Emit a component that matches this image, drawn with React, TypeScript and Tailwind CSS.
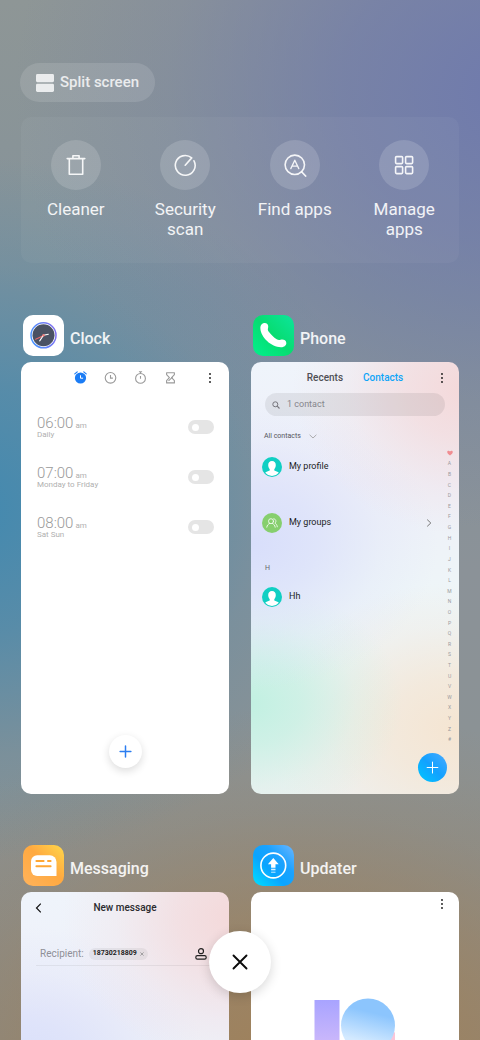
import type { ReactNode } from "react";

type IconProps = { className?: string };

function SplitIcon({ className }: IconProps) {
  return (
    <svg viewBox="0 0 18 18" className={className} fill="currentColor" aria-hidden="true">
      <rect x="0" y="0" width="18" height="8.2" rx="1.4" />
      <rect x="0" y="9.8" width="18" height="8.2" rx="1.4" />
    </svg>
  );
}

function TrashIcon() {
  return (
    <svg viewBox="0 0 24 24" className="size-6" fill="none" stroke="currentColor" strokeWidth="1.6" strokeLinejoin="round" strokeLinecap="round" aria-hidden="true">
      <path d="M3.200 5.600h17.600M5.300 5.600v15.600h13.400v-15.600M8.900 5.400V2.800h6.200v2.600" />
    </svg>
  );
}

function ScanIcon() {
  return (
    <svg viewBox="0 0 24 24" className="size-6" fill="none" stroke="currentColor" strokeWidth="1.6" strokeLinecap="round" strokeLinejoin="round" aria-hidden="true">
      <path d="M21 7.800A9.900 9.900 0 1 1 18.700 4.900L12.200 12.200" />
    </svg>
  );
}

function FindIcon() {
  return (
    <svg viewBox="0 0 24 24" className="size-6" fill="none" stroke="currentColor" strokeLinecap="round" strokeLinejoin="round" aria-hidden="true">
      <circle cx="11.8" cy="11.8" r="9.7" strokeWidth="1.6" />
      <path d="M18.800 19l3.800 4" strokeWidth="1.8" />
      <path d="M7.800 15.600l4-8.400 4 8.400M9.600 13.200h4.400" strokeWidth="1.3" />
    </svg>
  );
}

function GridIcon() {
  return (
    <svg viewBox="0 0 24 24" className="size-6" fill="none" stroke="currentColor" strokeWidth="1.6" aria-hidden="true">
      <rect x="3.600" y="3.600" width="7" height="7" rx="1" />
      <rect x="13.600" y="3.600" width="7" height="7" rx="1" />
      <rect x="3.600" y="13.600" width="7" height="7" rx="1" />
      <rect x="13.600" y="13.600" width="7" height="7" rx="1" />
    </svg>
  );
}

function DotsIcon() {
  return (
    <svg viewBox="0 0 4 12" className="h-3 w-1" fill="#111" aria-hidden="true">
      <circle cx="2" cy="2" r="0.9" />
      <circle cx="2" cy="6" r="0.9" />
      <circle cx="2" cy="10" r="0.9" />
    </svg>
  );
}

function PlusIcon({ className, width = 1.6 }: IconProps & { width?: number }) {
  return (
    <svg viewBox="0 0 14 14" className={className} fill="none" stroke="currentColor" strokeWidth={width} strokeLinecap="round" aria-hidden="true">
      <path d="M7 1.2v11.6M1.2 7h11.6" />
    </svg>
  );
}

function ClockAppIcon() {
  return (
    <svg viewBox="0 0 41 41" className="size-[41px]" aria-hidden="true">
      <defs>
        <linearGradient id="clock-ring" x1="0" x2="1" y1="0.6" y2="0.3">
          <stop offset="0" stopColor="#4a94ff" />
          <stop offset="1" stopColor="#8270ef" />
        </linearGradient>
      </defs>
      <rect width="41" height="41" rx="10" fill="#fff" />
      <circle cx="20.5" cy="20.3" r="12.5" fill="#fff" stroke="url(#clock-ring)" strokeWidth="1.5" />
      <circle cx="20.5" cy="20.3" r="11" fill="#4a5264" />
      <path d="M20.8 20.6L12.6 24.2" stroke="#ec6a6a" strokeWidth="1.1" strokeLinecap="round" />
      <path d="M20.5 20.3l4.8-1.1M20.5 20.3l-3.8 5.6" stroke="#fff" strokeWidth="1.1" strokeLinecap="round" />
      <circle cx="20.5" cy="20.3" r="1.2" fill="#f08080" />
    </svg>
  );
}

function PhoneAppIcon() {
  return (
    <svg viewBox="0 0 41 41" className="size-[41px]" aria-hidden="true">
      <defs>
        <linearGradient id="phone-bg" x1="0" x2="1" y1="1" y2="0">
          <stop offset="0" stopColor="#02f08c" />
          <stop offset="0.5" stopColor="#07dc71" />
          <stop offset="1" stopColor="#0de59c" />
        </linearGradient>
      </defs>
      <rect width="41" height="41" rx="10" fill="url(#phone-bg)" />
      <path
        d="M7.4 13.6C7.1 10 9.500 7.900 12 8.100C14.600 8.300 15.900 10.600 15 13.200C14.600 14.600 14.900 15.600 15.800 16.800C17.900 19.700 20.600 22.300 23.700 24.300C25 25.100 26 25.300 27.500 24.800C30.300 23.900 33 25.200 33.300 27.700C33.500 30.100 31.500 32.100 28.200 32.200C18.500 32.400 7.700 22.500 7.400 13.600Z"
        fill="#fff"
      />
    </svg>
  );
}

function MessagingAppIcon() {
  return (
    <svg viewBox="0 0 41 41" className="size-[41px]" aria-hidden="true">
      <defs>
        <linearGradient id="msg-bg" x1="0" x2="1" y1="1" y2="0">
          <stop offset="0" stopColor="#ffb35c" />
          <stop offset="0.55" stopColor="#ffa940" />
          <stop offset="1" stopColor="#ffd84a" />
        </linearGradient>
      </defs>
      <rect width="41" height="41" rx="10" fill="url(#msg-bg)" />
      <path d="M14.200 10.200h12.600a6.700 6.700 0 0 1 6.700 6.700V31H14.200a6.200 6.200 0 0 1-6.200-6.200v-8.400a6.200 6.200 0 0 1 6.200-6.200z" fill="#fff" />
      <path d="M13.400 16.100h7.200M25 16.100h2.600M13.400 21.300h14.200" stroke="#ffa733" strokeWidth="2" strokeLinecap="round" />
    </svg>
  );
}

function UpdaterAppIcon() {
  return (
    <svg viewBox="0 0 41 41" className="size-[41px]" aria-hidden="true">
      <defs>
        <linearGradient id="upd-bg" x1="0" x2="1" y1="1" y2="0">
          <stop offset="0" stopColor="#00e1ff" />
          <stop offset="0.4" stopColor="#0aa4ff" />
          <stop offset="0.65" stopColor="#1ba2ff" />
          <stop offset="1" stopColor="#6cb6ff" />
        </linearGradient>
      </defs>
      <rect width="41" height="41" rx="10" fill="url(#upd-bg)" />
      <circle cx="20.300" cy="20.500" r="12.400" fill="none" stroke="#fff" strokeWidth="1.600" />
      <path d="M20.300 13l5.400 6.200h-3.200v3.500h-4.400v-3.500h-3.200z" fill="#fff" />
      <path d="M18.100 23.700h4.400v1.600h-4.400z" fill="#fff" opacity="0.85" />
      <path d="M18.100 26.600h4.400v1.400h-4.400z" fill="#fff" opacity="0.55" />
    </svg>
  );
}

function AlarmTabIcon() {
  return (
    <svg viewBox="0 0 13 13" className="size-[13px]" aria-hidden="true">
      <circle cx="6.500" cy="7" r="5.600" fill="#1b7cf5" />
      <path d="M0.800 2.900L3.200 0.900M12.200 2.900L9.800 0.900" stroke="#1b7cf5" strokeWidth="1.200" strokeLinecap="round" />
      <path d="M6.500 4.300v2.900h2.600" fill="none" stroke="#fff" strokeWidth="1" />
    </svg>
  );
}

function WorldTabIcon() {
  return (
    <svg viewBox="0 0 13 13" className="size-[13px]" fill="none" stroke="#9a9a9a" aria-hidden="true">
      <circle cx="6.500" cy="6.800" r="5.300" strokeWidth="1.100" />
      <path d="M6.500 3.900v3.200h2.400" strokeWidth="1.100" />
    </svg>
  );
}

function StopwatchTabIcon() {
  return (
    <svg viewBox="0 0 13 13" className="size-[13px]" fill="none" stroke="#9a9a9a" aria-hidden="true">
      <circle cx="6.500" cy="7.400" r="4.900" strokeWidth="1.100" />
      <path d="M4.900 0.800h3.200M6.500 0.800v1.600M6.500 5v2.700" strokeWidth="1.100" />
    </svg>
  );
}

function TimerTabIcon() {
  return (
    <svg viewBox="0 0 13 13" className="size-[13px]" fill="none" stroke="#9a9a9a" strokeWidth="1.100" strokeLinejoin="round" aria-hidden="true">
      <path d="M2.600 1.700h7.800v1.900L7.600 6.600l2.800 3v2.300H2.600V9.600l2.800-3-2.800-3z" />
      <path d="M4.500 9.800l4-3.600" />
    </svg>
  );
}

function PersonAvatar() {
  return (
    <svg viewBox="0 0 20 20" className="size-5" aria-hidden="true">
      <circle cx="10" cy="10" r="10" fill="#10cfc3" />
      <path d="M10 4c2.500 0 3.900 1.700 3.800 4.200-.1 1.700-.700 3-1.500 3.900v1.300c1.500.7 3.500 1.100 4.500 2.300A9.400 9.400 0 0 1 10 19a9.400 9.400 0 0 1-6.800-3.300c1-1.200 3-1.600 4.500-2.300v-1.300c-.8-.9-1.400-2.200-1.500-3.900C6.100 5.700 7.500 4 10 4z" fill="#fff" />
    </svg>
  );
}

function GroupAvatar() {
  return (
    <svg viewBox="0 0 20 20" className="size-5" aria-hidden="true">
      <circle cx="10" cy="10" r="10" fill="#86cf6e" />
      <g fill="none" stroke="#fff" strokeWidth="0.800" strokeLinecap="round">
        <circle cx="9" cy="8.200" r="2.500" />
        <path d="M4.800 14.200c.3-2 1.300-3 2.700-3.700M13.200 14.200c-.3-2-1.300-3-2.700-3.700M11.700 5.800c2.300 0 3 3 1.200 4.400 1.300.6 2.200 1.900 2.400 3.600" />
      </g>
    </svg>
  );
}

const actions = [
  { label: "Cleaner", icon: <TrashIcon /> },
  { label: "Security scan", icon: <ScanIcon /> },
  { label: "Find apps", icon: <FindIcon /> },
  { label: "Manage apps", icon: <GridIcon /> },
];

const alarms = [
  { time: "06:00", repeat: "Daily" },
  { time: "07:00", repeat: "Monday to Friday" },
  { time: "08:00", repeat: "Sat Sun" },
];

const letters = "ABCDEFGHIJKLMNOPQRSTUVWXYZ#".split("");

const tintedSurface =
  "bg-[radial-gradient(ellipse_85%_34%_at_105%_6%,#f4d8d9_0%,#f4d8d9b0_35%,#f4d8d938_70%,#f4d8d900_100%),radial-gradient(ellipse_90%_34%_at_0%_42%,#d8defb_0%,#d8defbb0_35%,#d8defb38_70%,#d8defb00_100%),radial-gradient(ellipse_75%_28%_at_-2%_79%,#c1f0e1_0%,#c1f0e1b0_35%,#c1f0e138_70%,#c1f0e100_100%),radial-gradient(ellipse_90%_34%_at_98%_85%,#f5e5d2_0%,#f5e5d2b0_35%,#f5e5d238_70%,#f5e5d200_100%),linear-gradient(180deg,#eff4fb_0%,#eeeff8_28%,#eef5f8_52%,#eef1f1_100%)]";

function AppTask({ name, icon, surface, children }: { name: string; icon: ReactNode; surface: string; children: ReactNode }) {
  return (
    <section className="flex min-w-0 flex-col">
      <header className="flex h-[41px] gap-[6px] pl-[2px]">
        {icon}
        <h2 className="mt-[12px] text-[16px] leading-6 font-medium text-white/90">{name}</h2>
      </header>
      <div className={`mt-[6px] flex aspect-[13/27] flex-col overflow-hidden rounded-[10px] ${surface}`}>{children}</div>
    </section>
  );
}

function ClockScreen() {
  return (
    <>
      <div className="flex h-[31px] items-center gap-[17px] pr-[17px] pl-[53px]">
        <button aria-label="Alarm"><AlarmTabIcon /></button>
        <button aria-label="World clock"><WorldTabIcon /></button>
        <button aria-label="Stopwatch"><StopwatchTabIcon /></button>
        <button aria-label="Timer"><TimerTabIcon /></button>
        <button aria-label="Clock options" className="ml-auto"><DotsIcon /></button>
      </div>
      <ul className="pt-[9px]">
        {alarms.map((a) => (
          <li key={a.time}>
            <label className="flex h-[50px] items-center justify-between pr-[15px] pl-4">
              <span className="flex flex-col">
                <span className="flex items-baseline gap-[2px] text-[#999]">
                  <span className="text-[15px] leading-4 font-light">{a.time}</span>
                  <span className="text-[8px] leading-none text-[#b0b0b0]">am</span>
                </span>
                <span className="text-[8px] leading-[8px] text-[#b0b0b0]">{a.repeat}</span>
              </span>
              <input
                type="checkbox"
                role="switch"
                className="flex h-[14px] w-[26px] appearance-none items-center rounded-full bg-[#e5e5e5] pl-1 before:size-[7px] before:rounded-full before:bg-white before:content-['']"
              />
            </label>
          </li>
        ))}
      </ul>
      <button aria-label="Add alarm" className="mt-auto mb-[26px] flex size-[33px] items-center justify-center self-center rounded-full bg-white text-[#2b7df0] shadow-[0_3px_9px_rgba(0,0,0,0.14)]">
        <PlusIcon className="size-[13px]" />
      </button>
    </>
  );
}

function ContactRow({ avatar, name, chevron }: { avatar: ReactNode; name: string; chevron?: boolean }) {
  return (
    <li>
      <button className="flex h-[56px] w-full items-center gap-[7px] text-left text-[9px] text-[#1c1e24]">
        {avatar}
        <span>{name}</span>
        {chevron && (
          <svg viewBox="0 0 6 8" className="mr-[8px] ml-auto h-2 w-[6px]" fill="none" stroke="#777" strokeWidth="1" aria-hidden="true">
            <path d="M1.200 0.600L4.800 4 1.200 7.400" />
          </svg>
        )}
      </button>
    </li>
  );
}

function PhoneScreen() {
  return (
    <>
      <div className="grid h-[31px] shrink-0 grid-cols-[1fr_auto_1fr] items-center px-[15px]">
        <span />
        <nav className="flex gap-[20px] text-[10px] font-medium">
          <button className="text-[#4f4f55]">Recents</button>
          <button className="text-[#0fa5f8]">Contacts</button>
        </nav>
        <button aria-label="Phone options" className="justify-self-end"><DotsIcon /></button>
      </div>
      <label className="mx-[14px] flex h-[23px] shrink-0 items-center gap-[7px] rounded-full bg-black/7 px-[7px]">
        <svg viewBox="0 0 8 8" className="size-2 shrink-0" fill="none" stroke="#75757c" aria-hidden="true">
          <circle cx="3.300" cy="3.300" r="2.500" strokeWidth="1" />
          <path d="M5.200 5.200l2.300 2.300" strokeWidth="1.100" />
        </svg>
        <input aria-label="Search contacts" placeholder="1 contact" className="min-w-0 flex-1 bg-transparent text-[9px] text-[#333] outline-none placeholder:text-[#86868c]" />
      </label>
      <div className="flex min-h-0 flex-1">
        <div className="min-w-0 flex-1 pt-[12px] pl-[11px]">
          <button className="flex h-[16px] items-center gap-2 pl-[2px] text-[7px] text-[#55555c]">
            All contacts
            <svg viewBox="0 0 8 5" className="h-[5px] w-2" fill="none" stroke="#999" strokeWidth="0.800" aria-hidden="true">
              <path d="M0.600 0.800L4 4 7.400 0.800" />
            </svg>
          </button>
          <ul className="-mt-[5px]">
            <ContactRow avatar={<PersonAvatar />} name="My profile" />
            <ContactRow avatar={<GroupAvatar />} name="My groups" chevron />
          </ul>
          <h3 className="mt-3 pl-[3px] text-[7px] leading-[10px] text-[#66666c]">H</h3>
          <ul className="-mt-1">
            <ContactRow avatar={<PersonAvatar />} name="Hh" />
          </ul>
        </div>
        <ol className="mt-8 flex h-[297px] w-[19px] flex-col items-center">
          <li className="flex flex-1 items-center">
            <svg viewBox="0 0 6 6" className="size-[6px]" fill="#f08d92" aria-label="Favorites">
              <path d="M3 5.500C1.200 4.300.2 3.300.2 2.100.2.500 2.200.2 3 1.500 3.800.2 5.800.5 5.800 2.100 5.800 3.300 4.800 4.300 3 5.500z" />
            </svg>
          </li>
          {letters.map((l) => (
            <li key={l} className="flex flex-1 items-center text-[5px] leading-none text-[#9a9a9e]">{l}</li>
          ))}
        </ol>
      </div>
      <button aria-label="Add contact" className="mr-[12px] mb-[12px] flex size-[29px] shrink-0 items-center justify-center self-end rounded-full bg-[linear-gradient(45deg,#00c8ff,#12a1ff_50%,#4aaaff)] text-white">
        <PlusIcon className="size-[13px]" width={1.1} />
      </button>
    </>
  );
}

function MessagingScreen() {
  return (
    <>
      <div className="grid h-[31px] grid-cols-[1fr_auto_1fr] items-center px-[14px]">
        <button aria-label="Back" className="justify-self-start">
          <svg viewBox="0 0 7 10" className="h-[10px] w-[7px]" fill="none" stroke="#111" strokeWidth="1.200" aria-hidden="true">
            <path d="M5.800 0.700L1.500 5l4.300 4.300" />
          </svg>
        </button>
        <h3 className="text-[10px] font-medium text-[#2a2a2e]">New message</h3>
      </div>
      <div className="mx-[15px] mt-[19px] flex h-[24px] items-center border-b border-black/6 pr-[7px] pl-1">
        <span className="text-[10px] text-[#8f8f97]">Recipient:</span>
        <span className="ml-[5px] flex h-[12px] items-center gap-[3px] rounded-full bg-black/5 px-1 text-[7px] font-bold text-[#1c1c20]">
          18730218809
          <button aria-label="Remove recipient">
            <svg viewBox="0 0 4 4" className="size-1" stroke="#777" strokeWidth="0.600" aria-hidden="true">
              <path d="M0.400 0.400l3.200 3.200M3.600 0.400L0.400 3.600" />
            </svg>
          </button>
        </span>
        <button aria-label="Choose contact" className="ml-auto">
          <svg viewBox="0 0 12 12" className="size-3" fill="none" stroke="#222" strokeWidth="1.200" aria-hidden="true">
            <circle cx="6" cy="3.200" r="2.500" />
            <rect x="0.800" y="7.600" width="10.400" height="3.600" rx="1.600" />
          </svg>
        </button>
      </div>
    </>
  );
}

function UpdaterScreen() {
  return (
    <>
      <button aria-label="Updater options" className="mt-[6px] mr-[15px] self-end"><DotsIcon /></button>
      <svg viewBox="0 0 82 82" className="mt-[88px] size-[82px] self-center" aria-hidden="true">
        <defs>
          <linearGradient id="one" x1="0" x2="0" y1="0" y2="1">
            <stop offset="0" stopColor="#a8a3ff" />
            <stop offset="0.500" stopColor="#c8b6fb" />
            <stop offset="1" stopColor="#f3c8e4" />
          </linearGradient>
          <linearGradient id="two" x1="0.600" x2="0.350" y1="0" y2="1">
            <stop offset="0.250" stopColor="#8cc5fd" />
            <stop offset="0.800" stopColor="#d4eaff" />
          </linearGradient>
        </defs>
        <rect x="0.500" y="2" width="25" height="78" fill="url(#one)" />
        <path d="M81 34v46H54V54z" fill="#fbc5d8" />
        <circle cx="54" cy="27.500" r="27" fill="url(#two)" />
      </svg>
    </>
  );
}

export default function App() {
  return (
    <div className="h-screen overflow-hidden bg-[radial-gradient(ellipse_105%_42%_at_108%_9%,#6f7aad_0%,#6f7aadb0_35%,#6f7aad38_70%,#6f7aad00_100%),radial-gradient(ellipse_90%_34%_at_-8%_49%,#4189b0_0%,#4189b0b0_35%,#4189b038_70%,#4189b000_100%),radial-gradient(ellipse_105%_34%_at_62%_102%,#a0815a_0%,#a0815ab0_35%,#a0815a38_70%,#a0815a00_100%),linear-gradient(180deg,#8e9696_0%,#84929a_28%,#8b9298_55%,#8b9294_75%,#8a8983_100%)] font-['Roboto','Noto_Sans',sans-serif]">
      <main className="px-[21px] pt-[63px]">
        <button className="-ml-px flex h-[39px] items-center gap-[6px] rounded-full bg-white/12 px-4 text-[15px] font-medium text-white/80">
          <SplitIcon className="size-[18px]" />
          Split screen
        </button>

        <div className="mt-[15px] grid min-h-[146px] grid-cols-4 rounded-[10px] bg-white/4 pt-[23px]">
          {actions.map((a) => (
            <button key={a.label} className="flex flex-col items-center text-white/90">
              <span className="flex size-[50px] items-center justify-center rounded-full bg-white/15">{a.icon}</span>
              <span className="mt-[9px] max-w-20 text-[17px] leading-5">{a.label}</span>
            </button>
          ))}
        </div>

        <div className="mt-[52px] grid grid-cols-2 gap-x-[22px] gap-y-[51px]">
          <AppTask name="Clock" icon={<ClockAppIcon />} surface="bg-white"><ClockScreen /></AppTask>
          <AppTask name="Phone" icon={<PhoneAppIcon />} surface={tintedSurface}><PhoneScreen /></AppTask>
          <AppTask name="Messaging" icon={<MessagingAppIcon />} surface={tintedSurface}><MessagingScreen /></AppTask>
          <AppTask name="Updater" icon={<UpdaterAppIcon />} surface="bg-white"><UpdaterScreen /></AppTask>
        </div>
      </main>

      <div className="pointer-events-none fixed inset-x-0 bottom-[47px] flex justify-center">
        <button aria-label="Close all apps" className="pointer-events-auto flex size-[62px] items-center justify-center rounded-full bg-white shadow-[0_3px_12px_rgba(0,0,0,0.16)]">
          <svg viewBox="0 0 16 16" className="size-4" stroke="#0a0a0a" strokeWidth="1.900" strokeLinecap="round" aria-hidden="true">
            <path d="M1.500 1.500l13 13M14.500 1.500l-13 13" />
          </svg>
        </button>
      </div>
    </div>
  );
}
